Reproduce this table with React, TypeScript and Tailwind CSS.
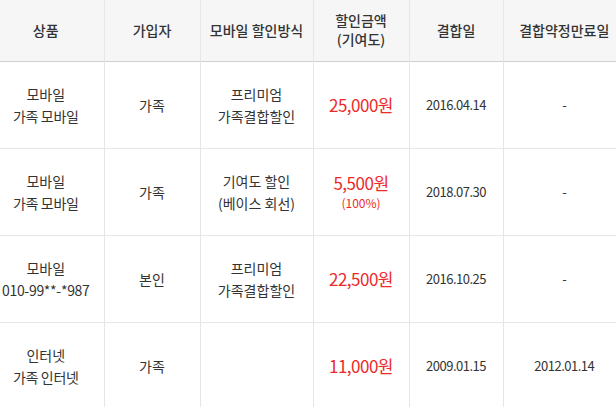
const rows = [
  { product: ["모바일", "가족 모바일"], member: "가족", method: ["프리미엄", "가족결합할인"], amount: "25,000원", rate: "", joined: "2016.04.14", expires: "-" },
  { product: ["모바일", "가족 모바일"], member: "가족", method: ["기여도 할인", "(베이스 회선)"], amount: "5,500원", rate: "(100%)", joined: "2018.07.30", expires: "-" },
  { product: ["모바일", "010-99**-*987"], member: "본인", method: ["프리미엄", "가족결합할인"], amount: "22,500원", rate: "", joined: "2016.10.25", expires: "-" },
  { product: ["인터넷", "가족 인터넷"], member: "가족", method: [], amount: "11,000원", rate: "", joined: "2009.01.15", expires: "2012.01.14" },
];

export default function App() {
  return (
    <div className="w-[616px] h-[407px] overflow-hidden bg-white text-[#333] font-['Noto_Sans_CJK_KR','Noto_Sans',sans-serif]">
      <table className="-ml-[12px] w-[637px] table-fixed border-collapse text-center text-[14px]">
        <colgroup>
          <col className="w-[116px]" />
          <col className="w-[96px]" />
          <col className="w-[113px]" />
          <col className="w-[96px]" />
          <col className="w-[94px]" />
          <col className="w-[122px]" />
        </colgroup>
        <thead>
          <tr className="h-[61px] bg-[#f6f6f6] border-b border-[#cfcfcf] leading-[19px] font-medium">
            <th className="border-r border-[#e6e6e6] font-medium">상품</th>
            <th className="border-r border-[#e6e6e6] font-medium">가입자</th>
            <th className="border-r border-[#e6e6e6] font-medium">모바일 할인방식</th>
            <th className="border-r border-[#e6e6e6] font-medium">
              할인금액
              <br />
              (기여도)
            </th>
            <th className="border-r border-[#e6e6e6] font-medium">결합일</th>
            <th className="font-medium">결합약정만료일</th>
          </tr>
        </thead>
        <tbody>
          {rows.map((r, i) => (
            <tr key={i} className="h-[87px] border-b border-[#e6e6e6] leading-[22px]">
              <td className="border-r border-[#e6e6e6]">
                {r.product[0]}
                <br />
                <span className="tracking-[-0.3px]">{r.product[1]}</span>
              </td>
              <td className="border-r border-[#e6e6e6]">{r.member}</td>
              <td className="border-r border-[#e6e6e6]">
                {r.method.length > 0 && (
                  <>
                    {r.method[0]}
                    <br />
                    {r.method[1]}
                  </>
                )}
              </td>
              <td className="border-r border-[#e6e6e6] text-[#ec2a2a]">
                <div className="text-[17px] leading-[22px] tracking-[-0.5px]">{r.amount}</div>
                {r.rate && <div className="text-[12px] leading-[18px]">{r.rate}</div>}
              </td>
              <td className="border-r border-[#e6e6e6] text-[13px] tracking-[-0.5px]">{r.joined}</td>
              <td className="text-[13px] tracking-[-0.5px]">{r.expires}</td>
            </tr>
          ))}
        </tbody>
      </table>
    </div>
  );
}
